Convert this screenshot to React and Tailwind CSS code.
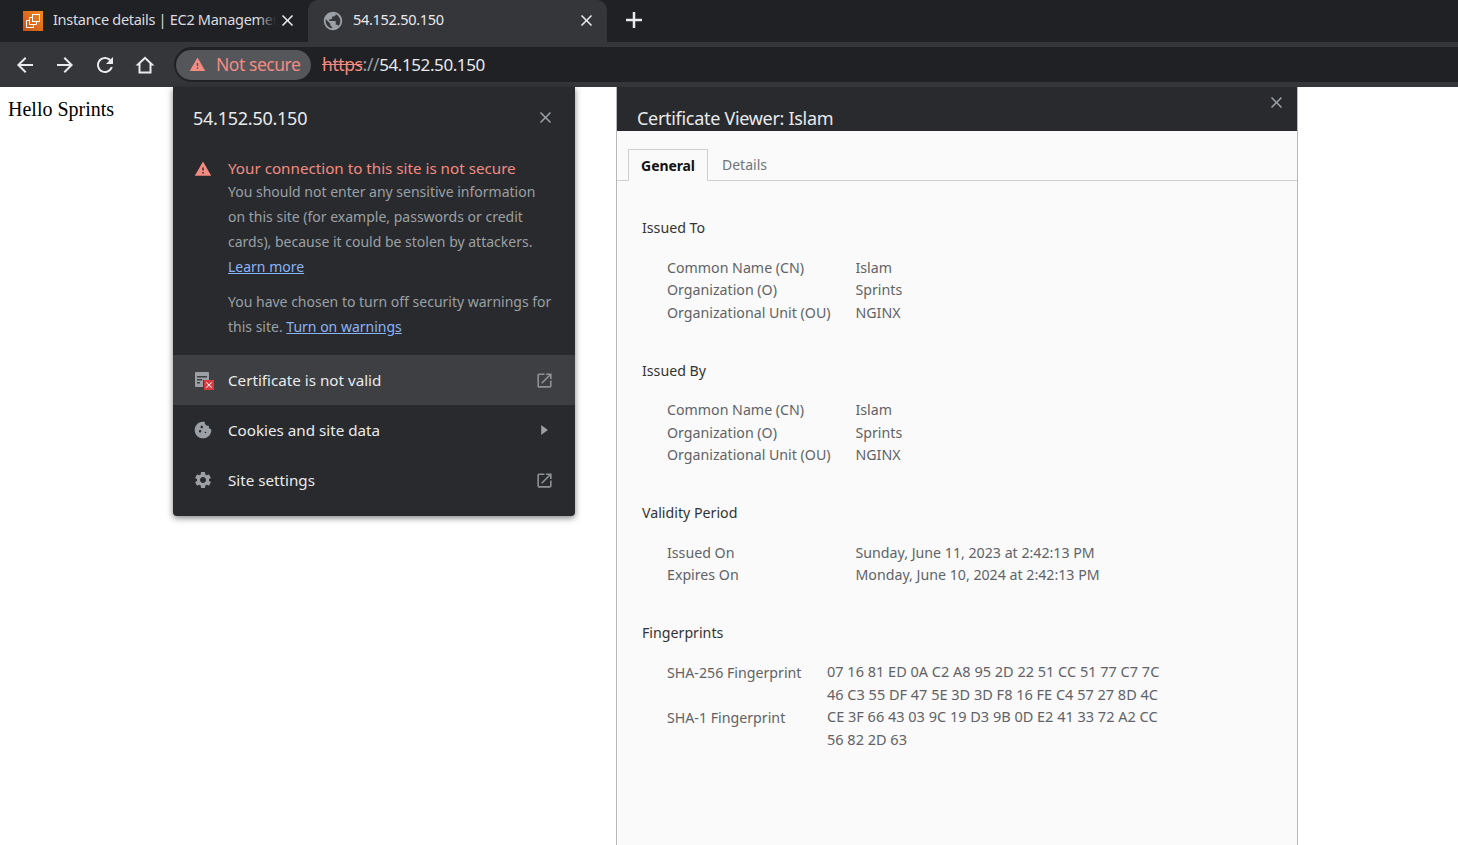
const warnPath = 'M1 21h22L12 2 1 21zm12-3h-2v-2h2v2zm0-4h-2v-4h2v4z'

// material paths, same ones chrome draws
function Icon({ d, className }) {
  return (
    <svg viewBox="0 0 24 24" className={className} fill="currentColor">
      <path d={d} />
    </svg>
  )
}

const backPath = 'M20 11H7.830l5.590-5.590L12 4l-8 8 8 8 1.410-1.410L7.830 13H20v-2z'
const forwardPath = 'M4 11h12.170l-5.590-5.590L12 4l8 8-8 8-1.410-1.410L16.170 13H4v-2z'
const reloadPath = 'M17.650 6.350C16.200 4.900 14.210 4 12 4c-4.420 0-7.990 3.580-7.990 8s3.570 8 7.990 8c3.730 0 6.840-2.550 7.730-6h-2.080c-.820 2.330-3.040 4-5.650 4-3.310 0-6-2.690-6-6s2.690-6 6-6c1.660 0 3.140.690 4.220 1.780L13 11h7V4l-2.350 2.350z'
const homePath = 'M12 3.500L2.500 12.500H5.500V20.500H18.500V12.500H21.500zM12 6.300l4.500 4.200v8h-9v-8z'
const closePath = 'M19 6.410L17.590 5 12 10.590 6.410 5 5 6.410 10.590 12 5 17.590 6.410 19 12 13.410 17.590 19 19 17.590 13.410 12z'
const plusPath = 'M20 13.250h-6.750V20h-2.500v-6.750H4v-2.500h6.750V4h2.500v6.750H20z'
const openPath = 'M19 19H5V5h7V3H5a2 2 0 0 0-2 2v14a2 2 0 0 0 2 2h14c1.100 0 2-.900 2-2v-7h-2v7zM14 3v2h3.590l-9.830 9.830 1.410 1.410L19 6.410V10h2V3h-7z'
const cookiePath = 'M21.950 10.990c-1.790-.030-3.700-1.950-2.680-4.220-2.970 1-5.780-1.590-5.190-4.560C7.110.740 2 6.410 2 12c0 5.520 4.480 10 10 10 5.890 0 10.540-5.080 9.950-11.010zM8.500 15c-.830 0-1.500-.670-1.500-1.500S7.670 12 8.500 12s1.500.670 1.500 1.500S9.330 15 8.500 15zm2-5C9.670 10 9 9.330 9 8.500S9.670 7 10.500 7s1.500.670 1.500 1.500-.670 1.500-1.500 1.500zm4.500 6c-.550 0-1-.450-1-1s.450-1 1-1 1 .450 1 1-.450 1-1 1z'
const gearPath = 'M19.140 12.940c.040-.300.060-.610.060-.940 0-.320-.020-.640-.070-.940l2.030-1.580c.180-.140.230-.410.120-.610l-1.920-3.320c-.120-.220-.370-.290-.590-.220l-2.390.960c-.500-.380-1.030-.700-1.620-.940l-.360-2.540c-.040-.240-.240-.410-.480-.410h-3.840c-.240 0-.430.170-.470.410l-.360 2.540c-.590.240-1.130.570-1.620.940l-2.390-.960c-.220-.080-.470 0-.590.220L2.740 8.870c-.120.210-.080.470.120.610l2.030 1.580c-.050.300-.070.620-.07.940s.020.640.07.940l-2.030 1.580c-.180.140-.230.410-.120.610l1.920 3.320c.120.220.370.290.590.220l2.390-.960c.500.380 1.030.700 1.620.940l.360 2.540c.050.240.240.410.480.410h3.840c.240 0 .440-.170.470-.410l.360-2.540c.590-.240 1.130-.560 1.620-.940l2.390.960c.220.080.470 0 .590-.220l1.920-3.320c.120-.220.070-.470-.120-.610l-2.010-1.580zM12 15.600c-1.980 0-3.600-1.620-3.600-3.600s1.620-3.600 3.600-3.600 3.600 1.620 3.600 3.600-1.620 3.600-3.600 3.600z'

function Ec2Icon() {
  return (
    <svg viewBox="0 0 20 20" className="w-5 h-5 shrink-0">
      <defs>
        <linearGradient id="ec2" x1="0" y1="1" x2="1" y2="0">
          <stop offset="0" stopColor="#c8511b" />
          <stop offset="1" stopColor="#f58a1f" />
        </linearGradient>
      </defs>
      <rect width="20" height="20" fill="url(#ec2)" />
      <g fill="none" stroke="#fff" strokeWidth="1">
        <rect x="9.500" y="3.500" width="7" height="7" />
        <path d="M9.500 6.500h-3v7h7v-3" />
        <path d="M6.500 9.500h-3v7h7v-3" />
      </g>
    </svg>
  )
}

function GlobeIcon() {
  return (
    <svg viewBox="0 0 24 24" className="w-[22px] h-[22px] shrink-0 -mx-[1px]" fill="#9aa0a6">
      <path d="M12 2C6.480 2 2 6.480 2 12s4.480 10 10 10 10-4.480 10-10S17.520 2 12 2zm-1 17.930c-3.950-.490-7-3.850-7-7.930 0-.620.080-1.210.210-1.790L9 15v1c0 1.100.900 2 2 2v1.930zm6.900-2.540c-.260-.810-1-1.390-1.900-1.390h-1v-3c0-.550-.450-1-1-1H8v-2h2c.550 0 1-.450 1-1V7h2c1.100 0 2-.900 2-2v-.410c2.930 1.190 5 4.060 5 7.410 0 2.080-.800 3.970-2.100 5.390z" />
    </svg>
  )
}

function CertIcon() {
  return (
    <div className="relative w-[18px] h-[18px] shrink-0">
      <svg viewBox="0 0 18 18" className="w-[18px] h-[18px]" fill="#9aa0a6">
        <path d="M2 1h12a1 1 0 0 1 1 1v7H9v7H2a1 1 0 0 1-1-1V2a1 1 0 0 1 1-1z" />
        <path d="M3 5h10v1.500H3zM3 8h5v1.500H3zM3 11h3v1.500H3z" fill="#3e3f43" />
      </svg>
      <div className="absolute right-[-2px] bottom-[-1px] w-[10px] h-[10px] bg-[#d93a3f] text-white flex items-center justify-center">
        <Icon d={closePath} className="w-[10px] h-[10px]" />
      </div>
    </div>
  )
}

function Tab({ active, icon, label, labelClass, fade }) {
  return (
    <div className={`h-[42px] flex items-center ${active ? 'w-[299px] bg-[#35363a] rounded-t-[10px] pl-[15px] pr-[11px]' : 'w-[308px] pl-[23px] pr-[11px]'}`}>
      {icon}
      <div className={`relative ml-[10px] mr-[2px] pb-[3px] flex-1 whitespace-nowrap overflow-hidden text-[14.500px] tracking-[-0.300px] ${labelClass}`}>
        {label}
        {fade && <div className="absolute right-0 top-0 bottom-0 w-[18px] bg-gradient-to-r from-transparent to-[#202124]" />}
      </div>
      <Icon d={closePath} className="w-[19px] h-[19px] -mt-[1px] text-[#e8eaed] shrink-0" />
    </div>
  )
}

function PopupRow({ icon, label, right, highlighted }) {
  return (
    <div className={`h-[50px] flex items-center pl-[20px] pr-[21px] ${highlighted ? 'bg-[#3e3f43]' : ''}`}>
      <div className="w-[20px] flex justify-center shrink-0">{icon}</div>
      <span className="ml-[15px] flex-1 text-[15.200px] text-[#e8eaed]">{label}</span>
      {right}
    </div>
  )
}

function Field({ label, value, labelWidth = 'w-[188.500px]', valueClass }) {
  return (
    <div className="flex h-[22.500px] items-center">
      <div className={`${labelWidth} shrink-0`}>{label}</div>
      <div className={valueClass}>{value}</div>
    </div>
  )
}

function Section({ title, children, className }) {
  return (
    <section className={className}>
      <h3 className="h-[22px] flex items-center text-[#333]">{title}</h3>
      <div className="mt-[17px] ml-[25px] text-[#5f6368]">{children}</div>
    </section>
  )
}

const externalIcon = <Icon d={openPath} className="w-[19px] h-[19px] text-[#8e9195]" />
const hexClass = 'text-[14.500px]'

export default function App() {
  return (
    <div className="w-[1458px] h-[845px] overflow-hidden bg-white flex flex-col font-['Noto_Sans',sans-serif]">
      {/* tab strip */}
      <div className="h-[42px] bg-[#202124] flex items-center shrink-0">
        <Tab fade icon={<Ec2Icon />} label="Instance details | EC2 Management Console" labelClass="text-[#dadce0]" />
        <Tab active icon={<GlobeIcon />} label="54.152.50.150" labelClass="text-[#e8eaed]" />
        <Icon d={plusPath} className="ml-[15px] -mt-[2px] w-[24px] h-[24px] text-[#e8eaed]" />
      </div>

      {/* toolbar */}
      <div className="h-[45px] bg-[#35363a] flex items-start pt-[5px] shrink-0">
        <div className="w-[174px] h-[35px] flex items-center pl-[13px] gap-[16px] text-[#e8eaed] shrink-0">
          <Icon d={backPath} className="w-[24px] h-[24px]" />
          <Icon d={forwardPath} className="w-[24px] h-[24px]" />
          <Icon d={reloadPath} className="w-[24px] h-[24px]" />
          <Icon d={homePath} className="w-[24px] h-[24px]" />
        </div>
        <div className="flex-1 h-[35px] bg-[#202124] rounded-l-full flex items-center pl-[2px]">
          <div className="h-[30px] w-[135px] bg-[#55565a] rounded-full flex items-center pl-[13px] text-[#f28b82] text-[17.500px] tracking-[-0.450px]">
            <Icon d={warnPath} className="w-[17px] h-[17px]" />
            <span className="ml-[10px]">Not secure</span>
          </div>
          <div className="ml-[11px] text-[17.500px] tracking-[-0.400px] text-[#9aa0a6]">
            <span className="text-[#f28b82] line-through">https</span>://<span className="text-[17px] text-[#e8eaed]">54.152.50.150</span>
          </div>
        </div>
      </div>

      {/* page */}
      <div className="relative flex-1 bg-white">
        <div className="pt-[9px] pl-[8px] text-[20px] leading-[26px] text-black font-['Liberation_Serif',serif]">Hello Sprints</div>

        {/* site info bubble */}
        <div className="absolute left-[173px] top-0 w-[402px] h-[429px] bg-[#292a2d] rounded-b-[4px] shadow-[0_2px_6px_rgba(0,0,0,0.5)] flex flex-col">
          <div className="h-[60px] flex items-center pl-[20px] pr-[20px] pt-[2px]">
            <span className="flex-1 text-[18px] tracking-[-0.250px] text-[#e8eaed]">54.152.50.150</span>
            <Icon d={closePath} className="w-[19px] h-[19px] -mt-[2px] text-[#9aa0a6]" />
          </div>
          <div className="flex pl-[21px] pr-[20px] pt-[10px]">
            <Icon d={warnPath} className="w-[18px] h-[18px] text-[#f28b82] shrink-0 mt-[3px]" />
            <div className="ml-[16px]">
              <div className="text-[15.200px] leading-[22px] text-[#f28b82]">Your connection to this site is not secure</div>
              <p className="text-[14px] leading-[25px] text-[#9aa0a6]">
                You should not enter any sensitive information on this site (for example, passwords or credit cards), because it could be stolen by attackers.{' '}
                <span className="text-[#8ab4f8] underline">Learn more</span>
              </p>
              <p className="mt-[10px] text-[14px] leading-[25px] text-[#9aa0a6]">
                You have chosen to turn off security warnings for this site.{' '}
                <span className="text-[#8ab4f8] underline">Turn on warnings</span>
              </p>
            </div>
          </div>
          <div className="mt-[16px]">
            <PopupRow highlighted icon={<CertIcon />} label="Certificate is not valid" right={externalIcon} />
            <PopupRow
              icon={<Icon d={cookiePath} className="w-[20px] h-[20px] text-[#9aa0a6]" />}
              label="Cookies and site data"
              right={<svg viewBox="0 0 8 12" className="w-[7px] h-[10px] mr-[6px]" fill="#9aa0a6"><path d="M0 0l8 6-8 6z" /></svg>}
            />
            <PopupRow
              icon={<Icon d={gearPath} className="w-[20px] h-[20px] text-[#9aa0a6]" />}
              label="Site settings"
              right={externalIcon}
            />
          </div>
        </div>

        {/* certificate viewer */}
        <div className="absolute left-[616px] top-0 bottom-0 w-[682px] border-x border-[#b9b9b9] bg-[#fafafa] flex flex-col">
          <div className="relative h-[44px] bg-[#292a2d] shrink-0 flex items-end pl-[20px]">
            <span className="text-[18px] leading-[26px] tracking-[-0.300px] text-[#e8eaed]">Certificate Viewer: Islam</span>
            <Icon d={closePath} className="absolute right-[11px] top-[6px] w-[19px] h-[19px] text-[#9aa0a6]" />
          </div>
          <div className="mt-[18px] h-[32px] flex items-end border-b border-[#cfcfcf] pl-[11px] text-[14px] shrink-0">
            <div className="h-[32px] w-[80px] -mb-px pb-[1px] flex items-center justify-center border border-b-0 border-[#cfcfcf] bg-[#fafafa] font-bold text-[#111] tracking-[-0.100px]">General</div>
            <div className="h-[32px] ml-[14px] pt-[1px] flex items-center text-[#70757a]">Details</div>
          </div>
          <div className="pl-[25px] pt-[36px] text-[14.200px]">
            <Section title="Issued To">
              <Field label="Common Name (CN)" value="Islam" />
              <Field label="Organization (O)" value="Sprints" />
              <Field label="Organizational Unit (OU)" value="NGINX" />
            </Section>
            <Section title="Issued By" className="mt-[36px]">
              <Field label="Common Name (CN)" value="Islam" />
              <Field label="Organization (O)" value="Sprints" />
              <Field label="Organizational Unit (OU)" value="NGINX" />
            </Section>
            <Section title="Validity Period" className="mt-[36px]">
              <Field label="Issued On" value="Sunday, June 11, 2023 at 2:42:13 PM" />
              <Field label="Expires On" value="Monday, June 10, 2024 at 2:42:13 PM" />
            </Section>
            <Section title="Fingerprints" className="mt-[36px]">
              <Field labelWidth="w-[160px]" valueClass={hexClass} label="SHA-256 Fingerprint" value="07 16 81 ED 0A C2 A8 95 2D 22 51 CC 51 77 C7 7C" />
              <Field labelWidth="w-[160px]" valueClass={hexClass} label="" value="46 C3 55 DF 47 5E 3D 3D F8 16 FE C4 57 27 8D 4C" />
              <Field labelWidth="w-[160px]" valueClass={hexClass} label="SHA-1 Fingerprint" value="CE 3F 66 43 03 9C 19 D3 9B 0D E2 41 33 72 A2 CC" />
              <Field labelWidth="w-[160px]" valueClass={hexClass} label="" value="56 82 2D 63" />
            </Section>
          </div>
        </div>
      </div>
    </div>
  )
}
